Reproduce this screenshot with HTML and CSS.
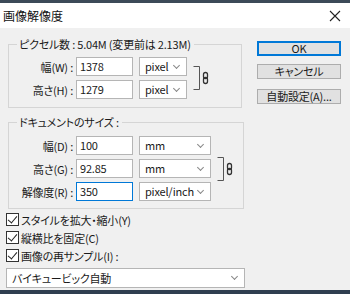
FILE: index.html
```html
<!DOCTYPE html>
<html lang="ja">
<head>
    <meta charset="UTF-8">
    <title>画像解像度</title>
    <link rel="stylesheet" href="styles.css">
</head>
<body>
    <div class="window">
        <div class="topstrip"></div>
        <div class="titlebar">
            <span class="title">画像解像度</span>
            <svg class="close" width="12" height="12" viewBox="0 0 12 12">
                <path d="M1 1L11 11M11 1L1 11" stroke="#222" stroke-width="1.1"/>
            </svg>
        </div>
        <div class="content">
            <div class="main">
                <div class="left">
                    <fieldset class="group pixels">
                        <legend>ピクセル数 : 5.04M (変更前は 2.13M)</legend>
                        <div class="rows-wrap">
                            <div class="rows">
                                <div class="row">
                                    <label>幅(W) :</label>
                                    <div class="input">1378</div>
                                    <div class="select small">pixel<span class="chev"></span></div>
                                </div>
                                <div class="row">
                                    <label>高さ(H) :</label>
                                    <div class="input">1279</div>
                                    <div class="select small">pixel<span class="chev"></span></div>
                                </div>
                            </div>
                            <svg class="link" width="18" height="26" viewBox="0 0 18 26">
                                <path d="M0.5 1.5H6.5V24.5H0.5" fill="none" stroke="#555" stroke-width="1"/>
                                <rect x="10.5" y="7.5" width="4" height="6" rx="2" fill="none" stroke="#333" stroke-width="1.3"/>
                                <rect x="10.5" y="12.5" width="4" height="6" rx="2" fill="none" stroke="#333" stroke-width="1.3"/>
                            </svg>
                        </div>
                    </fieldset>

                    <fieldset class="group doc">
                        <legend>ドキュメントのサイズ :</legend>
                        <div class="rows-wrap">
                            <div class="rows">
                                <div class="row">
                                    <label>幅(D) :</label>
                                    <div class="input">100</div>
                                    <div class="select wide">mm<span class="chev"></span></div>
                                </div>
                                <div class="row">
                                    <label>高さ(G) :</label>
                                    <div class="input">92.85</div>
                                    <div class="select wide">mm<span class="chev"></span></div>
                                </div>
                                <div class="row">
                                    <label>解像度(R) :</label>
                                    <div class="input focus">350</div>
                                    <div class="select wide">pixel/inch<span class="chev"></span></div>
                                </div>
                            </div>
                            <svg class="link" width="18" height="26" viewBox="0 0 18 26">
                                <path d="M0.5 1.5H6.5V24.5H0.5" fill="none" stroke="#555" stroke-width="1"/>
                                <rect x="10.5" y="7.5" width="4" height="6" rx="2" fill="none" stroke="#333" stroke-width="1.3"/>
                                <rect x="10.5" y="12.5" width="4" height="6" rx="2" fill="none" stroke="#333" stroke-width="1.3"/>
                            </svg>
                        </div>
                    </fieldset>
                </div>

                <div class="buttons">
                    <div class="btn default">OK</div>
                    <div class="btn">キャンセル</div>
                    <div class="btn auto">自動設定(A)...</div>
                </div>
            </div>

            <div class="checks">
                <div class="check"><span class="box"></span>スタイルを拡大・縮小(Y)</div>
                <div class="check"><span class="box"></span>縦横比を固定(C)</div>
                <div class="check"><span class="box"></span>画像の再サンプル(I) :</div>
            </div>

            <div class="select method">バイキュービック自動<span class="chev"></span></div>
        </div>
        <div class="bottomstrip"></div>
    </div>
</body>
</html>
```

FILE: styles.css
```css
body {
    margin: 0;
    padding: 0;
    font-family: "Noto Sans CJK JP", "Noto Sans", sans-serif;
    font-size: 11px;
    line-height: 14px;
    font-feature-settings: "palt" 1;
    letter-spacing: -0.2px;
    color: #1a1a1a;
}
.window {
    width: 350px;
    height: 294px;
    display: flex;
    flex-direction: column;
    background-color: #f0f0f0;
    overflow: hidden;
}
.topstrip {
    height: 3px;
    background-color: #3c4a58;
}
.titlebar {
    height: 25px;
    background-color: #ffffff;
    display: flex;
    align-items: center;
    justify-content: space-between;
    padding: 0 9px 0 3px;
}
.title {
    font-size: 12px;
    letter-spacing: 0;
    color: #111;
}
.content {
    flex: 1;
    padding: 9px 0 0 6px;
}
.main {
    display: flex;
}
.left {
    width: 238px;
}
.group {
    margin: 0 0 0 2px;
    border: 1px solid #d5d5d5;
    padding: 0 0 8px 0;
    min-width: 0;
}
.group legend {
    margin-left: 8px;
    padding: 0 3px 0 2px;
    line-height: 14px;
}
.group.pixels {
    width: 232px;
}
.group.doc {
    margin-top: 7px;
    width: 234px;
    padding-bottom: 7px;
}
.rows-wrap {
    display: flex;
    align-items: center;
    padding-top: 6px;
}
.rows {
    display: flex;
    flex-direction: column;
    gap: 4px;
}
.group.doc .rows-wrap {
    padding-top: 7px;
}
.row {
    display: flex;
    align-items: center;
    gap: 3px;
}
.row label {
    width: 64px;
    text-align: right;
}
.input {
    width: 52px;
    height: 17px;
    line-height: 17px;
    padding-left: 3px;
    background-color: #ffffff;
    border: 1px solid #b5b5b5;
}
.input.focus {
    border-color: #0078d7;
}
.select {
    position: relative;
    height: 17px;
    line-height: 17px;
    padding-left: 5px;
    margin-left: 3px;
    background-color: #ffffff;
    border: 1px solid #b5b5b5;
}
.select.small {
    width: 41px;
}
.select.wide {
    width: 65px;
}
.chev {
    position: absolute;
    right: 7px;
    top: 5px;
    width: 4px;
    height: 4px;
    border-right: 1px solid #888;
    border-bottom: 1px solid #888;
    transform: rotate(45deg);
}
.link {
    margin-left: 6px;
}
.buttons {
    display: flex;
    flex-direction: column;
    margin-left: 13px;
    padding-top: 4px;
}
.btn {
    width: 82px;
    height: 13px;
    line-height: 13px;
    text-align: center;
    background-color: #e1e1e1;
    border: 1px solid #adadad;
    margin-bottom: 8px;
}
.btn.default {
    border: 2px solid #0078d7;
    width: 80px;
    height: 11px;
    line-height: 11px;
}
.btn.auto {
    margin-top: 2px;
}
.checks {
    margin-top: 4px;
    display: flex;
    flex-direction: column;
    gap: 5px;
}
.check {
    display: flex;
    align-items: center;
    height: 13px;
}
.box {
    position: relative;
    width: 11px;
    height: 11px;
    border: 1px solid #333;
    background-color: #ffffff;
    margin-right: 2px;
}
.box::after {
    content: "";
    position: absolute;
    left: 3px;
    top: 0px;
    width: 4px;
    height: 8px;
    border-right: 1.3px solid #222;
    border-bottom: 1.3px solid #222;
    transform: rotate(40deg);
}
.select.method {
    margin: 6px 0 0 0;
    width: 232px;
    height: 18px;
    line-height: 18px;
}
.select.method .chev {
    top: 5px;
}
.bottomstrip {
    height: 4px;
    background-color: #2f3e50;
}
```
